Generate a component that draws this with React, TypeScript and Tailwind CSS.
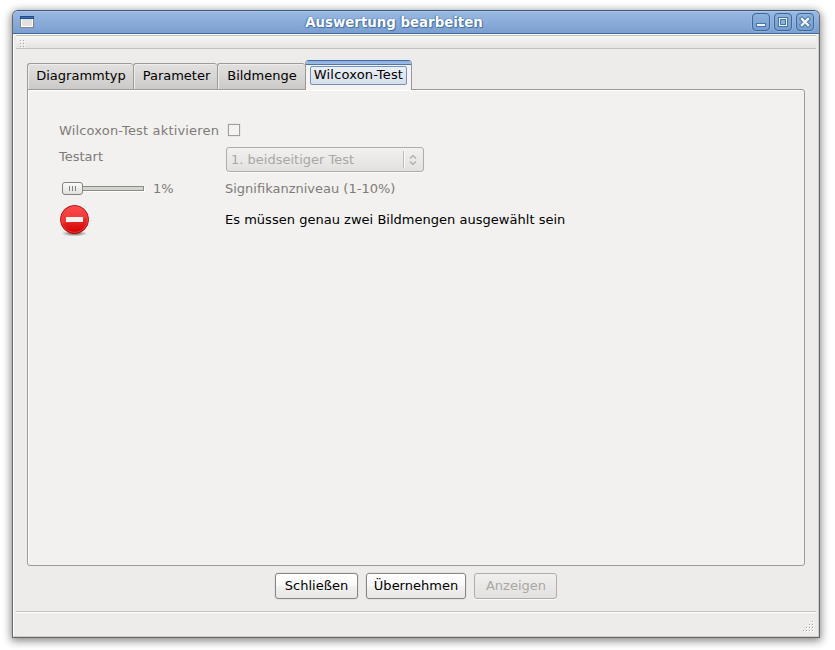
import type { ReactNode } from "react";

function TitleButton({ children }: { children: ReactNode }) {
  return (
    <div className="flex h-[18px] w-[18px] items-center justify-center rounded-[4px] border border-[#3f6797] bg-gradient-to-b from-[#8fb2de] to-[#749ccd] shadow-[0_0_0_1px_#9bbae1aa]">
      {children}
    </div>
  );
}

function Tab({ label, width }: { label: string; width: string }) {
  return (
    <div
      className={`${width} flex h-[27px] items-center justify-center rounded-t-[3px] border border-r-0 border-[#9c9b98] bg-gradient-to-b from-[#e2e1df] to-[#cbcac8] pb-px shadow-[inset_1px_1px_0_#eeedeb]`}
    >
      {label}
    </div>
  );
}

function PushButton({ label, width, disabled }: { label: string; width: string; disabled?: boolean }) {
  return (
    <button
      disabled={disabled}
      className={`${width} flex h-[26px] items-center justify-center whitespace-nowrap rounded-[3px] border ${
        disabled
          ? "border-[#aeadab] bg-gradient-to-b from-[#f0efee] to-[#e2e1df] pl-px text-[#aaa7a3] shadow-[0_1px_0_#fafafa]"
          : "border-[#888683] bg-[linear-gradient(#fff_0%,#f9f9f9_48%,#f1f1f0_52%,#e7e6e5_100%)] text-black shadow-[0_0_0_1px_#e3e2e0]"
      }`}
    >
      {label}
    </button>
  );
}

const handleDots = [[0, 0], [3, 0], [0, 3], [3, 3], [0, 6], [3, 6]];
const gripDots = [[9, 0], [6, 3], [9, 3], [3, 6], [6, 6], [9, 6], [0, 9], [3, 9], [6, 9], [9, 9]];

export default function App() {
  return (
    <div className="h-[650px] w-[835px] overflow-hidden bg-white pl-[12px] pt-[10px] font-['DejaVu_Sans',sans-serif] text-[13px] leading-[16px] text-black">
      <div className="flex h-[628px] w-[808px] flex-col overflow-hidden rounded-t-[6px] border border-[#696663] border-t-[#3c5878] bg-[#edeceb] shadow-[0_2px_9px_1px_rgba(0,0,0,0.48)]">
        <header className="flex h-[23px] shrink-0 items-center border-b border-[#426a9f] bg-gradient-to-b from-[#99b9e3] to-[#7a9fd0] pl-[7px] pr-[5px] shadow-[inset_0_1px_0_#abc5e8]">
          <svg width="14" height="12" viewBox="0 0 14 12" shapeRendering="crispEdges">
            <rect width="14" height="12" fill="#858780" />
            <rect x="1" y="1" width="12" height="10" fill="#fff" />
            <rect x="2" y="3" width="10" height="7" fill="#dfe2dd" />
            <rect width="14" height="3" fill="#1f4a87" />
            <rect x="1" y="1" width="12" height="1" fill="#3b74bd" />
          </svg>
          <div className="flex-1 pl-[2px] pt-[2px] text-center text-[13.35px] font-bold leading-[18px] text-white [text-shadow:0_0_1px_#3c6aa5,1px_1px_1px_#456fa6,-1px_0_1px_#557fb5]">
            Auswertung bearbeiten
          </div>
          <div className="flex gap-[4px]">
            <TitleButton>
              <svg width="16" height="16" shapeRendering="crispEdges">
                <rect x="3" y="9" width="10" height="4" fill="#4775ae" />
                <rect x="4" y="10" width="8" height="2" fill="#eef3fa" />
              </svg>
            </TitleButton>
            <TitleButton>
              <svg width="16" height="16" shapeRendering="crispEdges">
                <rect x="3" y="3" width="10" height="10" fill="#4775ae" />
                <rect x="4" y="4" width="8" height="8" fill="#eef3fa" />
                <rect x="5" y="5" width="6" height="6" fill="#4775ae" />
                <rect x="6" y="6" width="4" height="4" fill="#8eb0dc" />
              </svg>
            </TitleButton>
            <TitleButton>
              <svg width="16" height="16" fill="none" strokeLinecap="square">
                <path d="M5 5l6 6M11 5l-6 6" stroke="#4775ae" strokeWidth="4.4" />
                <path d="M5 5l6 6M11 5l-6 6" stroke="#f4f7fc" strokeWidth="2.4" />
              </svg>
            </TitleButton>
          </div>
        </header>

        <main className="flex flex-1 flex-col border-b border-l border-r border-b-[#d0cecb] border-l-white border-r-[#d0cecb] pt-[1px] shadow-[inset_0_1px_0_#f8f8f7]">
          <div className="ml-[2px] flex h-[14px] w-[800px] items-center border-b border-t border-[#c2c1be] bg-gradient-to-b from-[#f7f7f6] to-[#e5e4e2] pl-[4px]">
            <svg className="mt-[5px]" width="6" height="9" shapeRendering="crispEdges">
              {handleDots.map(([x, y]) => (
                <g key={`${x}-${y}`}>
                  <rect x={x + 1} y={y + 1} width="1" height="1" fill="#fff" />
                  <rect x={x} y={y} width="1" height="1" fill="#aaa9a6" />
                </g>
              ))}
            </svg>
          </div>

          <nav className="relative z-10 ml-[13px] mt-[11px] flex h-[30px] items-end">
            <Tab label="Diagrammtyp" width="w-[106px] pl-px" />
            <Tab label="Parameter" width="w-[84px] pl-[2px]" />
            <Tab label="Bildmenge" width="w-[88px] pl-px" />
            <div className="flex h-[30px] w-[107px] flex-col overflow-hidden rounded-t-[4px] border border-b-0 border-[#989795] border-t-[#426b9e] bg-[#f5f4f3]">
              <div className="h-[4px] border-b border-[#4e75a6] bg-gradient-to-b from-[#87aee0] to-[#9fbee6]" />
              <div className="mx-[4px] mt-px flex h-[19px] items-center justify-center rounded-[2px] border border-[#7492b9] bg-gradient-to-b from-[#eceff4] to-[#d7dfea] pb-px tracking-[0.17px]">
                Wilcoxon-Test
              </div>
            </div>
          </nav>

          <section className="ml-[13px] mt-[-1px] h-[477px] w-[778px] rounded-b-[3px] rounded-tr-[3px] border border-[#9c9b98] bg-[#f2f1f0] pl-[31px] pt-[32px] text-[#7e7b77] shadow-[inset_1px_1px_0_#fff]">
            <div className="flex h-[16px] items-center">
              <span className="w-[169px] pt-[2px] tracking-[0.17px]">Wilcoxon-Test aktivieren</span>
              <span className="h-[12px] w-[12px] border border-[#a09e9b] bg-[#f4f3f2] shadow-[0_0_0_1px_#e8e7e5]" />
            </div>
            <div className="mt-[9px] flex h-[25px]">
              <span className="w-[167px] pt-[2px]">Testart</span>
              <div className="flex h-[25px] w-[198px] items-center rounded-[3px] border border-[#aeadaa] bg-gradient-to-b from-[#f2f1f0] to-[#e2e1df] pl-[4px] text-[#aaa7a3] shadow-[0_1px_0_#fafafa]">
                <span className="flex-1">1. beidseitiger Test</span>
                <span className="flex h-[17px] w-[20px] items-center border-l border-[#bdbbb8] pl-[5px] shadow-[inset_1px_0_0_#fafafa]">
                  <svg width="8" height="12" fill="none" stroke="#aaa8a5" strokeWidth="1.1">
                    <path d="M1 4.5L4 1.5L7 4.5M1 7.5L4 10.5L7 7.5" />
                  </svg>
                </span>
              </div>
            </div>
            <div className="mt-[9px] flex h-[15px] items-start">
              <div className="ml-[3px] flex h-[15px] w-[91px] items-center">
                <div className="flex h-[13px] w-[21px] items-center justify-center gap-[2px] rounded-[3px] border border-[#83817e] bg-gradient-to-b from-[#fafafa] to-[#e1e0de]">
                  <i className="h-[5px] w-px bg-[#83817e]" />
                  <i className="h-[5px] w-px bg-[#83817e]" />
                  <i className="h-[5px] w-px bg-[#83817e]" />
                </div>
                <div className="ml-[-1px] h-[5px] w-[62px] border border-[#8c8b88] bg-[#d4d4cf] shadow-[1px_1px_0_#fff]" />
              </div>
              <span className="w-[72px]">1%</span>
              <span>Signifikanzniveau (1-10%)</span>
            </div>
            <div className="mt-[9px] flex h-[32px] text-black">
              <svg className="mr-[134px] shrink-0" width="32" height="32" viewBox="0 0 32 32">
                <defs>
                  <linearGradient id="disc" x1="0" y1="0" x2="0" y2="1">
                    <stop offset="0" stopColor="#fb4545" />
                    <stop offset=".5" stopColor="#e92a2a" />
                    <stop offset="1" stopColor="#cf0000" />
                  </linearGradient>
                  <radialGradient id="discShadow">
                    <stop offset="0" stopColor="#000" stopOpacity=".65" />
                    <stop offset="1" stopColor="#000" stopOpacity="0" />
                  </radialGradient>
                </defs>
                <ellipse cx="15.5" cy="28.5" rx="13" ry="2.8" fill="url(#discShadow)" />
                <circle cx="15.5" cy="14.5" r="14" fill="url(#disc)" stroke="#b50808" />
                <circle cx="15.5" cy="14.5" r="13" fill="none" stroke="#ff6464" strokeOpacity=".5" />
                <path d="M3 18Q15 19 28 12Q26 3 15.5 2Q4 3 3 18Z" fill="#ff5656" fillOpacity=".35" />
                <rect x="7" y="12" width="17" height="5" fill="#f3f2f1" />
              </svg>
              <span className="pt-[7px] tracking-[0.02px]">Es müssen genau zwei Bildmengen ausgewählt sein</span>
            </div>
          </section>

          <div className="mt-[7px] flex gap-[8px] pl-[261px]">
            <PushButton label="Schließen" width="w-[83px]" />
            <PushButton label="Übernehmen" width="w-[100px]" />
            <PushButton label="Anzeigen" width="w-[83px]" disabled />
          </div>

          <footer className="ml-[2px] mt-[12px] flex w-[800px] flex-1 justify-end border-t border-[#c2c1be] pr-[1px] pt-[9px] shadow-[inset_0_1px_0_#fff]">
            <svg width="12" height="12" shapeRendering="crispEdges">
              {gripDots.map(([x, y]) => (
                <g key={`${x}-${y}`}>
                  <rect x={x} y={y} width="2" height="2" fill="#fff" />
                  <rect x={x} y={y} width="1" height="1" fill="#9e9c98" />
                </g>
              ))}
            </svg>
          </footer>
        </main>
      </div>
    </div>
  );
}
